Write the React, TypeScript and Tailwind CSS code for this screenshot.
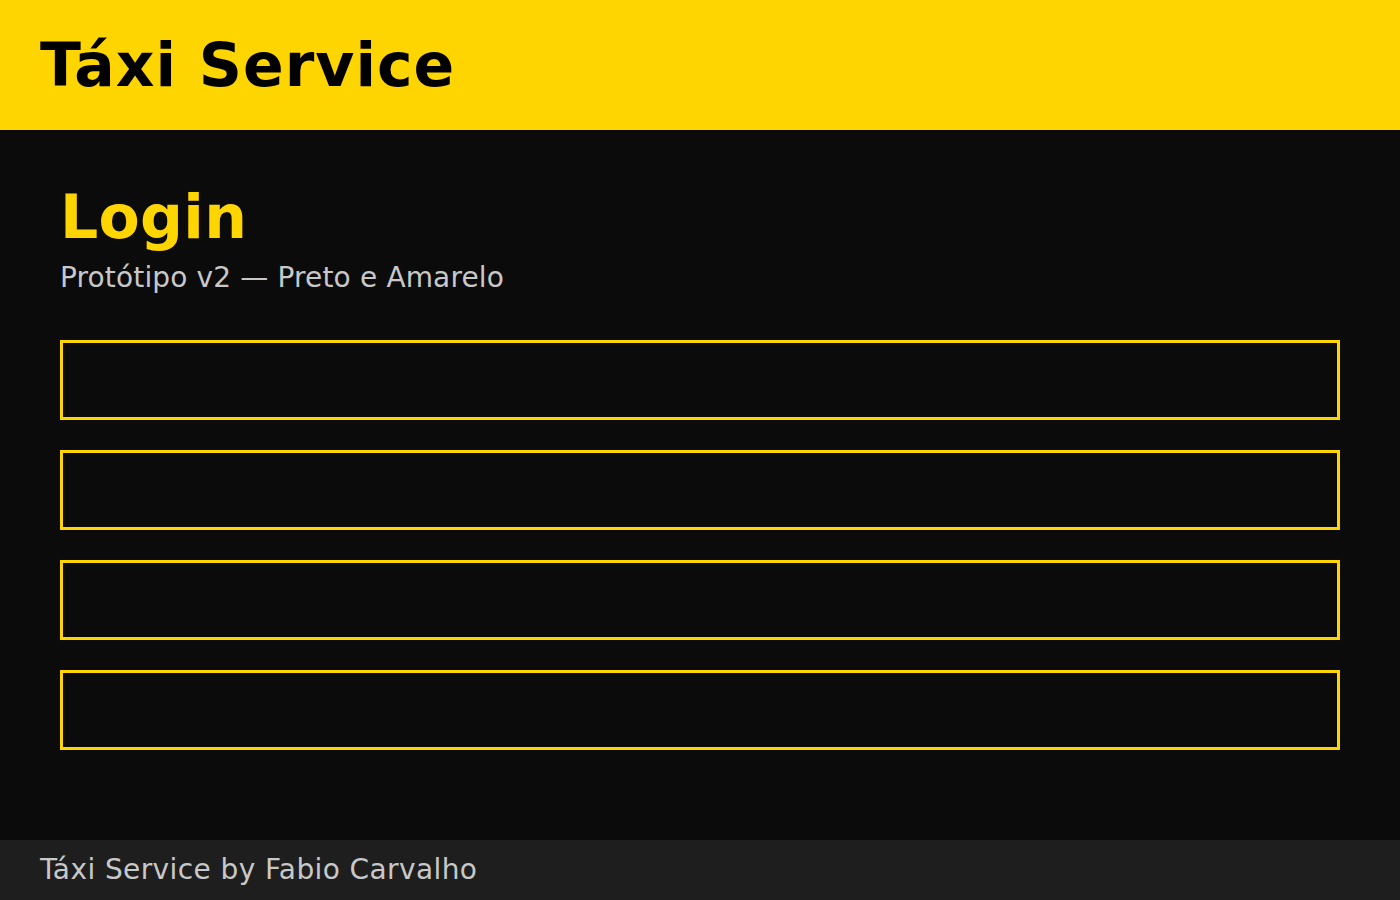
export default function App() {
  const font = { fontFamily: '"DejaVu Sans", sans-serif' };
  return (
    <div className="flex h-[900px] flex-col bg-[#0b0b0b]" style={font}>
      <header className="flex h-[130px] shrink-0 items-center bg-[#ffd500] px-10">
        <h1 className="text-[60px] font-bold leading-none tracking-[1px] text-black">Táxi Service</h1>
      </header>
      <main className="flex flex-1 flex-col px-[60px] pt-[51px]">
        <h2 className="text-[60px] font-bold leading-[72px] tracking-[0.3px] text-[#ffd500]">Login</h2>
        <p className="mt-[8px] text-[28px] leading-[34px] tracking-[0.15px] text-[#c8c8c8]">Protótipo v2 — Preto e Amarelo</p>
        <div className="mt-[45px] flex flex-col gap-[30px]">
          <div className="h-[80px] border-[length:3px] border-solid border-[#ffd500] bg-[#0b0b0b]" />
          <div className="h-[80px] border-[length:3px] border-solid border-[#ffd500] bg-[#0b0b0b]" />
          <div className="h-[80px] border-[length:3px] border-solid border-[#ffd500] bg-[#0b0b0b]" />
          <div className="h-[80px] border-[length:3px] border-solid border-[#ffd500] bg-[#0b0b0b]" />
        </div>
      </main>
      <footer className="flex h-[60px] shrink-0 items-start bg-[#1e1e1e] px-10 pt-[13px]">
        <span className="text-[28px] leading-[34px] tracking-[0.4px] text-[#c8c8c8]">Táxi Service by Fabio Carvalho</span>
      </footer>
    </div>
  );
}
